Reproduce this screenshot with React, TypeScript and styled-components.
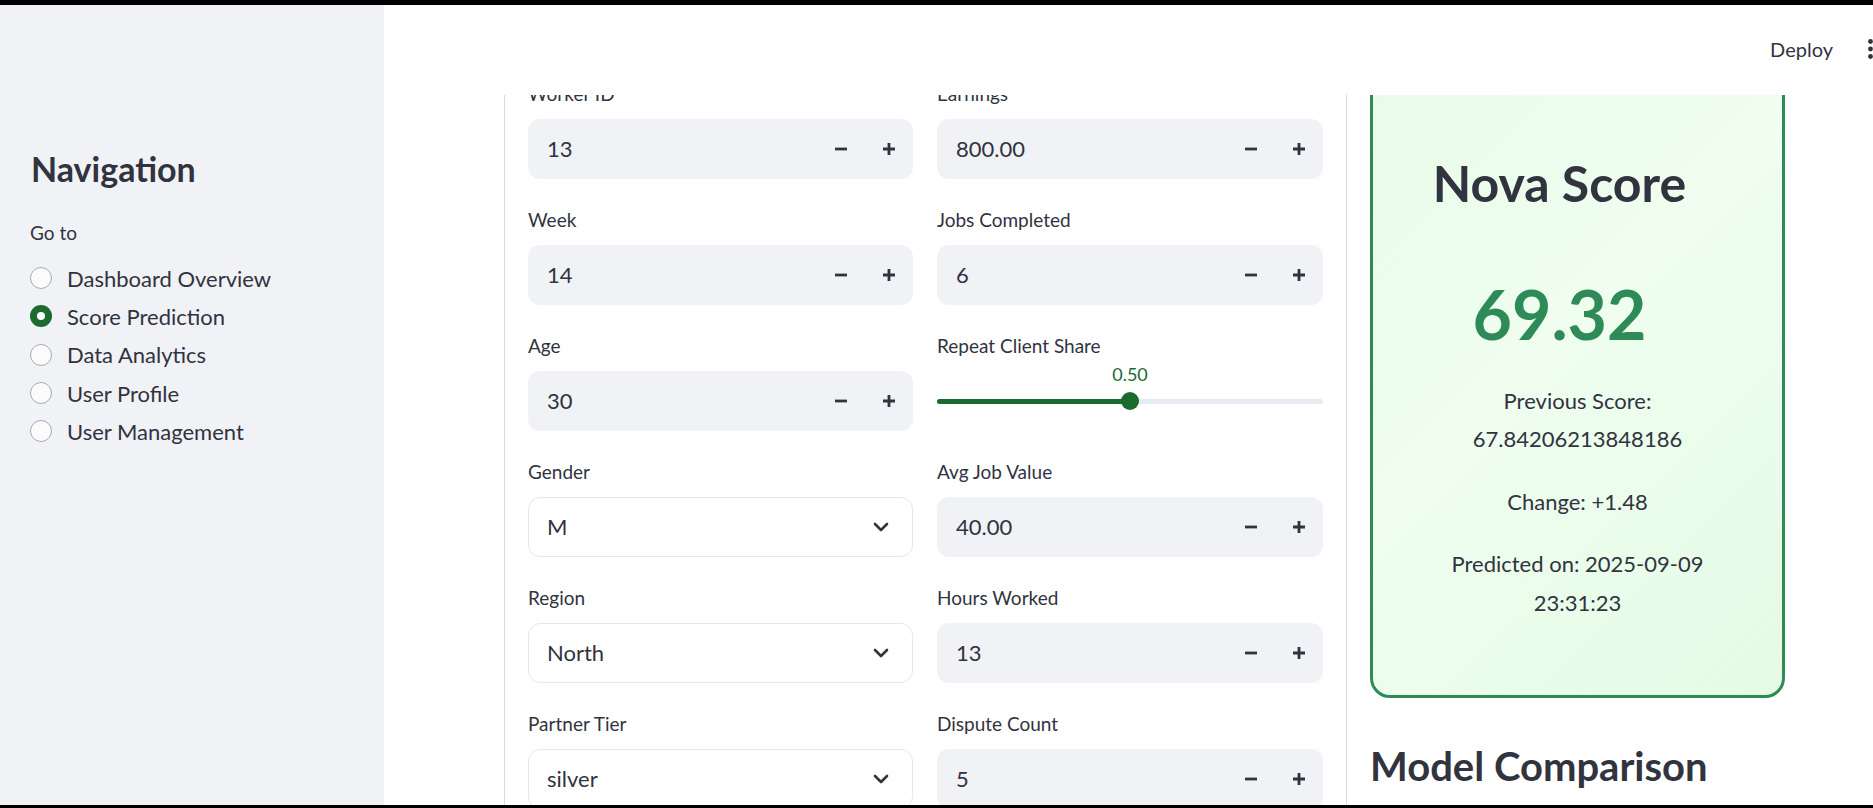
import React from "react";
import styled, { createGlobalStyle } from "styled-components";

const GREEN_DARK = "#1b6a2f";
const GREEN = "#2e8b57";
const INK = "#31333f";

const GlobalStyle = createGlobalStyle`
  html, body { margin: 0; padding: 0; width: 100%; height: 100%; overflow: hidden; background: #000; }
  body { font-family: Lato, "Noto Sans", sans-serif; color: ${INK}; }
  *, *::before, *::after { box-sizing: border-box; }
`;

const Frame = styled.div`
  width: 1873px;
  height: 808px;
  display: flex;
  flex-direction: column;
  background: #000;
  overflow: hidden;
`;

const Strip = styled.div<{ $h: number }>`
  height: ${(p) => p.$h}px;
  flex: none;
  background: #000;
`;

const Body = styled.div`
  flex: 1;
  min-height: 0;
  display: flex;
`;

const Sidebar = styled.aside`
  width: 384px;
  flex: none;
  background: #f0f2f6;
  padding: 140px 30px 0 30px;
`;

const NavTitle = styled.h2`
  margin: 0;
  padding-left: 1px;
  font-size: 34px;
  font-weight: 700;
  line-height: 48px;
  color: ${INK};
`;

const GoTo = styled.div`
  margin-top: 25px;
  font-size: 19px;
  line-height: 30px;
`;

const RadioList = styled.div`
  margin-top: 11px;
  display: flex;
  flex-direction: column;
`;

const RadioRow = styled.label`
  display: flex;
  align-items: center;
  gap: 15px;
  height: 38.3px;
  font-size: 22px;
  color: ${INK};
`;

const RadioDot = styled.span<{ $on?: boolean }>`
  width: 22px;
  height: 22px;
  flex: none;
  border-radius: 50%;
  display: flex;
  align-items: center;
  justify-content: center;
  background: ${(p) => (p.$on ? GREEN_DARK : "#fbfbfc")};
  border: ${(p) => (p.$on ? "none" : "1.5px solid #a9abb2")};
  &::after {
    content: "";
    width: 8px;
    height: 8px;
    border-radius: 50%;
    background: #fff;
    display: ${(p) => (p.$on ? "block" : "none")};
  }
`;

const Main = styled.main`
  flex: 1;
  min-width: 0;
  display: flex;
  flex-direction: column;
  background: #fff;
`;

const Header = styled.header`
  height: 90px;
  flex: none;
  display: flex;
  align-items: center;
  justify-content: flex-end;
  padding-bottom: 2px;
  background: #fff;
`;

const DeployButton = styled.button`
  border: none;
  background: none;
  padding: 0;
  margin-right: 35px;
  font-family: inherit;
  font-size: 20px;
  line-height: 1;
  color: ${INK};
`;

const MenuIcon = styled.svg`
  flex: none;
  display: block;
`;

const Viewport = styled.div`
  flex: 1;
  min-height: 0;
  overflow: hidden;
`;

const Content = styled.div`
  margin-top: -41px;
  padding-left: 120px;
  display: grid;
  grid-template-columns: 843px 415px;
  column-gap: 23px;
  align-items: start;
`;

const FormBox = styled.section`
  border: 1px solid #d9dadd;
  border-radius: 12px;
  padding: 24px 23px 40px 23px;
  display: grid;
  grid-template-columns: 385px 386px;
  column-gap: 24px;
  row-gap: 26px;
`;

const Field = styled.div`
  display: flex;
  flex-direction: column;
`;

const Label = styled.div`
  height: 30px;
  line-height: 30px;
  font-size: 19px;
  color: ${INK};
  margin-bottom: 10px;
  white-space: nowrap;
`;

const NumberBox = styled.div`
  height: 60px;
  border-radius: 12px;
  background: #f0f2f6;
  display: flex;
  align-items: center;
`;

const InputValue = styled.span`
  flex: 1;
  padding-left: 19px;
  padding-bottom: 2px;
  font-size: 22px;
  color: ${INK};
`;

const StepButton = styled.button`
  width: 48px;
  height: 60px;
  border: none;
  background: transparent;
  padding: 0;
  display: flex;
  align-items: center;
  justify-content: center;
  color: ${INK};
`;

const SelectBox = styled.div`
  height: 60px;
  border-radius: 12px;
  background: #fff;
  border: 1px solid #e6e7eb;
  display: flex;
  align-items: center;
  padding: 0 23px 0 18px;
`;

const SelectValue = styled.span`
  flex: 1;
  padding-bottom: 2px;
  font-size: 22px;
  color: ${INK};
`;

const SliderValueRow = styled.div`
  position: relative;
  height: 26px;
`;

const SliderValue = styled.span`
  position: absolute;
  top: 0;
  transform: translateX(-50%);
  line-height: 26px;
  font-size: 18px;
  color: ${GREEN_DARK};
`;

const TrackWrap = styled.div`
  height: 28px;
  display: flex;
  align-items: center;
`;

const Track = styled.div`
  position: relative;
  width: 100%;
  height: 5px;
  border-radius: 3px;
  background: #e6eaf1;
`;

const TrackFill = styled.div`
  height: 100%;
  border-radius: 3px;
  background: ${GREEN_DARK};
`;

const Thumb = styled.div`
  position: absolute;
  top: 50%;
  width: 18px;
  height: 18px;
  border-radius: 50%;
  background: ${GREEN_DARK};
  transform: translate(-50%, -50%);
`;

const SideColumn = styled.div`
  display: flex;
  flex-direction: column;
`;

const ScoreCard = styled.div`
  border: 3px solid ${GREEN};
  border-radius: 20px;
  background: linear-gradient(135deg, #e9fbe9 0%, #effeef 45%, #e5fae5 100%);
  padding: 96px 30px 48px 30px;
  text-align: center;
`;

const CardTitle = styled.h2`
  margin: 0;
  padding-right: 36px;
  font-size: 50px;
  font-weight: 700;
  line-height: 1.2;
  color: ${INK};
`;

const ScoreValue = styled.h1`
  margin: 60px 0 0 0;
  padding-right: 36px;
  font-size: 68px;
  font-weight: 700;
  line-height: 1.2;
  color: ${GREEN};
`;

const CardBody = styled.div`
  margin-top: 27px;
`;

const CardText = styled.p`
  margin: 0 0 24px 0;
  font-size: 22px;
  line-height: 38.6px;
  color: ${INK};
`;

const SectionTitle = styled.h3`
  margin: 44px 0 0 0;
  font-size: 40px;
  font-weight: 700;
  line-height: 1.2;
  color: ${INK};
  white-space: nowrap;
`;

const MinusIcon = () => (
  <svg width="14" height="14" viewBox="0 0 14 14">
    <path d="M1 7h12" stroke={INK} strokeWidth="2.8" strokeLinecap="butt" />
  </svg>
);

const PlusIcon = () => (
  <svg width="14" height="14" viewBox="0 0 14 14">
    <path d="M1 7h12M7 1v12" stroke={INK} strokeWidth="2.8" strokeLinecap="butt" />
  </svg>
);

const Chevron = () => (
  <svg width="16" height="10" viewBox="0 0 16 10">
    <path d="M2 2l6 6 6-6" fill="none" stroke={INK} strokeWidth="2.6" strokeLinecap="round" strokeLinejoin="round" />
  </svg>
);

type FieldProps = { label: string; value: string };

const NumberField = ({ label, value }: FieldProps) => (
  <Field>
    <Label>{label}</Label>
    <NumberBox>
      <InputValue>{value}</InputValue>
      <StepButton aria-label="decrement">
        <MinusIcon />
      </StepButton>
      <StepButton aria-label="increment">
        <PlusIcon />
      </StepButton>
    </NumberBox>
  </Field>
);

const SelectField = ({ label, value }: FieldProps) => (
  <Field>
    <Label>{label}</Label>
    <SelectBox>
      <SelectValue>{value}</SelectValue>
      <Chevron />
    </SelectBox>
  </Field>
);

const SliderField = ({ label, value, min, max }: { label: string; value: number; min: number; max: number }) => {
  const pct = ((value - min) / (max - min)) * 100;
  return (
    <Field>
      <Label style={{ marginBottom: 0 }}>{label}</Label>
      <SliderValueRow>
        <SliderValue style={{ left: `${pct}%` }}>{value.toFixed(2)}</SliderValue>
      </SliderValueRow>
      <TrackWrap>
        <Track>
          <TrackFill style={{ width: `${pct}%` }} />
          <Thumb style={{ left: `${pct}%` }} />
        </Track>
      </TrackWrap>
    </Field>
  );
};

const navItems = ["Dashboard Overview", "Score Prediction", "Data Analytics", "User Profile", "User Management"];

export default function App() {
  return (
    <>
      <GlobalStyle />
      <Frame>
        <Strip $h={5} />
        <Body>
          <Sidebar>
            <NavTitle>Navigation</NavTitle>
            <GoTo>Go to</GoTo>
            <RadioList>
              {navItems.map((item) => (
                <RadioRow key={item}>
                  <RadioDot $on={item === "Score Prediction"} />
                  {item}
                </RadioRow>
              ))}
            </RadioList>
          </Sidebar>
          <Main>
            <Header>
              <DeployButton>Deploy</DeployButton>
              <MenuIcon width="5" height="20" viewBox="0 0 5 20">
                <circle cx="2.5" cy="2.5" r="2.4" fill={INK} />
                <circle cx="2.5" cy="10" r="2.4" fill={INK} />
                <circle cx="2.5" cy="17.5" r="2.4" fill={INK} />
              </MenuIcon>
            </Header>
            <Viewport>
              <Content>
                <FormBox>
                  <NumberField label="Worker ID" value="13" />
                  <NumberField label="Earnings" value="800.00" />
                  <NumberField label="Week" value="14" />
                  <NumberField label="Jobs Completed" value="6" />
                  <NumberField label="Age" value="30" />
                  <SliderField label="Repeat Client Share" value={0.5} min={0} max={1} />
                  <SelectField label="Gender" value="M" />
                  <NumberField label="Avg Job Value" value="40.00" />
                  <SelectField label="Region" value="North" />
                  <NumberField label="Hours Worked" value="13" />
                  <SelectField label="Partner Tier" value="silver" />
                  <NumberField label="Dispute Count" value="5" />
                </FormBox>
                <SideColumn>
                  <ScoreCard>
                    <CardTitle>Nova Score</CardTitle>
                    <ScoreValue>69.32</ScoreValue>
                    <CardBody>
                      <CardText>
                        Previous Score:
                        <br />
                        67.84206213848186
                      </CardText>
                      <CardText>Change: +1.48</CardText>
                      <CardText>
                        Predicted on: 2025-09-09
                        <br />
                        23:31:23
                      </CardText>
                    </CardBody>
                  </ScoreCard>
                  <SectionTitle>Model Comparison</SectionTitle>
                </SideColumn>
              </Content>
            </Viewport>
          </Main>
        </Body>
        <Strip $h={3} />
      </Frame>
    </>
  );
}
